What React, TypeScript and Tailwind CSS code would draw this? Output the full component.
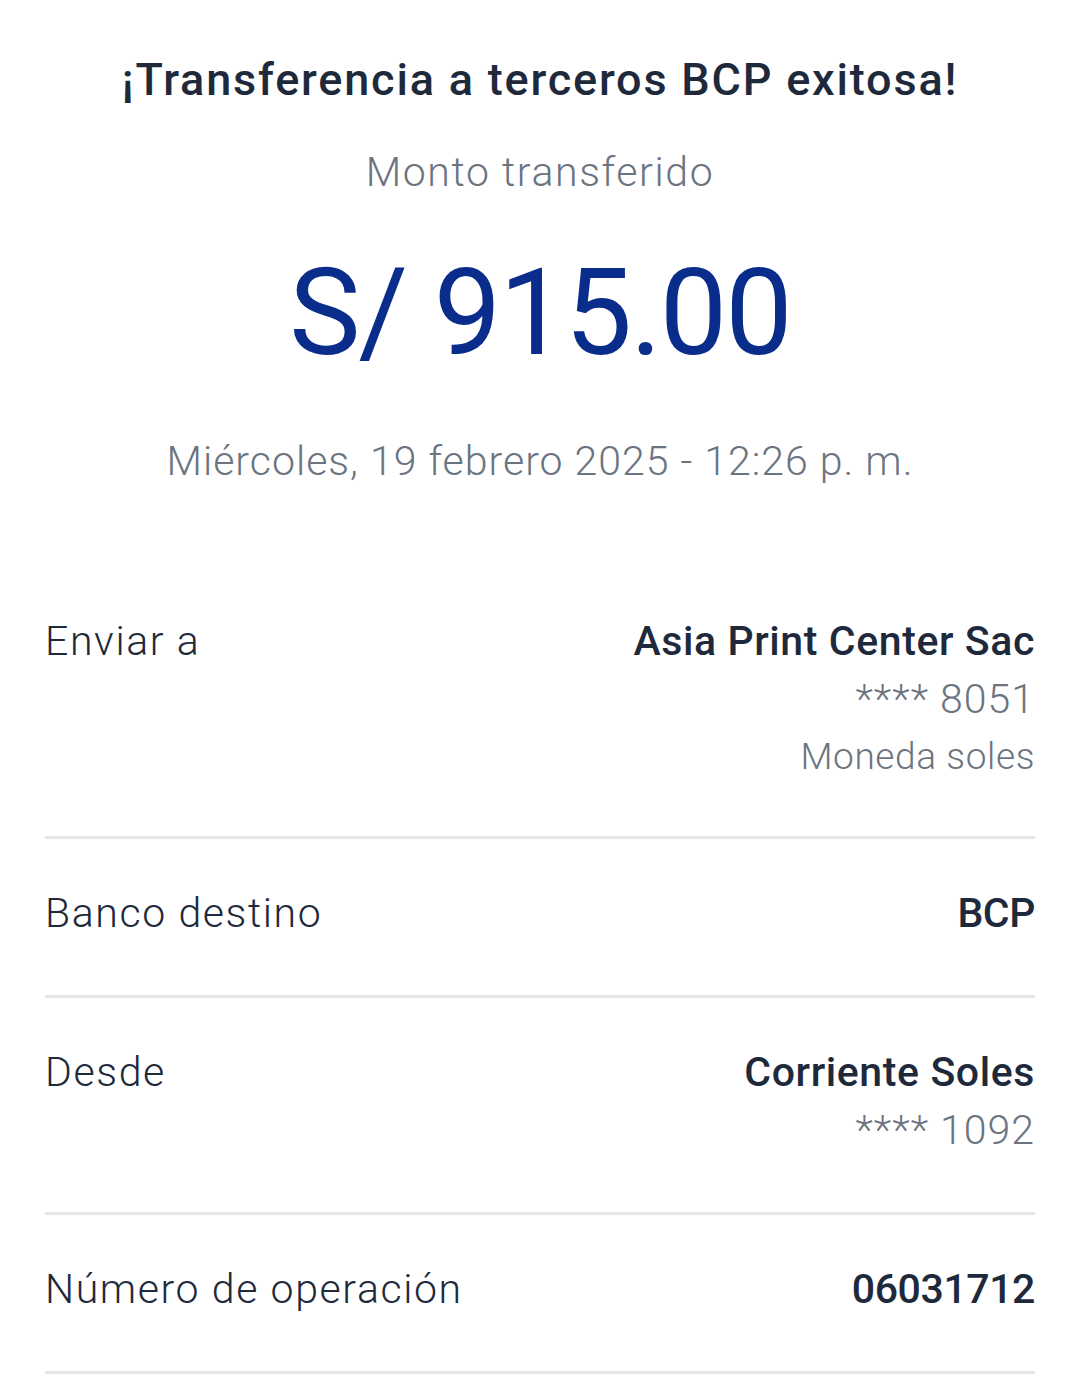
const rows = [
  { label: 'Enviar a', value: 'Asia Print Center Sac', extra: ['**** 8051', 'Moneda soles'], tight: false },
  { label: 'Banco destino', value: 'BCP', extra: [], tight: true },
  { label: 'Desde', value: 'Corriente Soles', extra: ['**** 1092'], tight: false },
  { label: 'Número de operación', value: '06031712', extra: [], tight: true },
];

export default function App() {
  return (
    <div className="min-h-[1385px] w-[1080px] bg-white font-['Roboto',sans-serif] text-[#1e2a3b]">
      {/* Cabecera */}
      <div className="flex flex-col items-center pt-[52px]">
        <h1 className="text-[45px] leading-[56px] font-medium tracking-[1.8px]">
          ¡Transferencia a terceros BCP exitosa!
        </h1>
        <p className="mt-[39px] text-[41px] leading-[50px] font-light tracking-[1.6px] text-[#6b7480]">
          Monto transferido
        </p>
        <p className="mt-[51px] text-[120px] leading-[130px] text-[#0a2d8c] tracking-[-2px]">S/ 915.00</p>
        <p className="mt-[58px] text-[41px] leading-[50px] font-light tracking-[1px] text-[#6b7480]">
          Miércoles, 19 febrero 2025 - 12:26 p. m.
        </p>
      </div>

      {/* Detalle */}
      <div className="mt-[126px] px-[45px]">
        {rows.map((row, i) => (
          <div
            key={row.label}
            className={`flex justify-between border-b-[3px] border-[#e6e6e6] ${i === 0 ? 'pt-0 pb-[50px]' : 'pt-[45px] pb-[53px]'}`}
          >
            <span className="text-[41px] leading-[58px] font-light tracking-[1.6px]">{row.label}</span>
            <div className="flex flex-col items-end">
              <span
                className={`text-[41px] leading-[58px] font-medium ${row.tight ? 'tracking-[-0.4px]' : 'tracking-[0.6px]'}`}
              >
                {row.value}
              </span>
              {row.extra.map((e) => (
                <span
                  key={e}
                  className={`leading-[58px] font-light text-[#6b7480] ${e.startsWith('*') ? 'text-[41px] tracking-[1px]' : 'text-[37px] tracking-[0.6px]'}`}
                >
                  {e}
                </span>
              ))}
            </div>
          </div>
        ))}
      </div>
    </div>
  );
}
